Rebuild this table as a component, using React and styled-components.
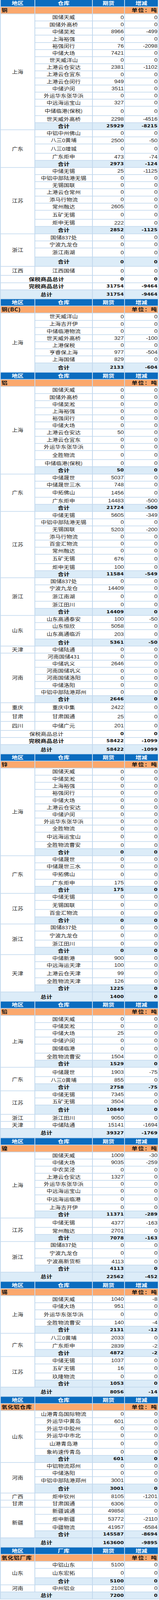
import React from 'react'
import styled, { createGlobalStyle } from 'styled-components'

const PAGE_HEIGHT = 4968

const GlobalStyle = createGlobalStyle`
  body {
    margin: 0;
    background: #fff;
  }
`

// the browser window may be shorter than the page; squeeze to fit the photo
const Frame = styled.div`
  overflow: hidden;
`

const Fit = styled.div`
  transform-origin: 0 0;
`

const Sheet = styled.div`
  display: grid;
  grid-template-columns: 86px 145px 80px 84px;
  gap: 2px;
  width: 405px;
  box-sizing: border-box;
  padding: 0 2px 2px;
  background: #c3d9ee;
  font-family: "Noto Sans CJK SC", sans-serif;
  font-size: 14.5px;
  color: #222;
`

const Cell = styled.div`
  display: flex;
  align-items: center;
  justify-content: center;
  height: ${({ $tall }) => ($tall ? '26.6px' : '20.1px')};
  line-height: 18px;
  white-space: nowrap;
  background: #fff;
`

const HeadCell = styled(Cell)`
  background: #0b6cbf;
  color: #fff;
  font-weight: 700;
  font-size: 15px;
`

const TitleCell = styled(Cell)`
  justify-content: ${({ $right }) => ($right ? 'flex-end' : 'flex-start')};
  padding: 0 1px 0 2px;
  background: #fba86d;
  color: #111;
  font-weight: 700;
  font-size: 15px;
  letter-spacing: ${({ $wide }) => ($wide ? '1.5px' : '0.5px')};
`

const RegionCell = styled.div`
  grid-row: span ${({ $span }) => $span};
  display: flex;
  align-items: center;
  justify-content: center;
  background: #fff;
  line-height: 18px;
`

const NameCell = styled(Cell)`
  grid-column: span ${({ $cols }) => $cols || 1};
  background: ${({ $sum }) => ($sum ? '#dcecf8' : '#fff')};
  font-weight: ${({ $bold }) => ($bold ? 700 : 400)};
  font-size: ${({ $bold }) => ($bold ? '15px' : '14.5px')};
  color: ${({ $bold }) => ($bold ? '#111' : '#222')};
`

const NumCell = styled(Cell)`
  justify-content: flex-end;
  padding-right: 1px;
  background: ${({ $sum }) => ($sum ? '#dcecf8' : '#fff')};
  font-family: ${({ $bold }) =>
    $bold ? '"DejaVu Sans", sans-serif' : '"Liberation Sans", Arial, sans-serif'};
  font-weight: ${({ $bold }) => ($bold ? 700 : 400)};
  font-size: ${({ $bold }) => ($bold ? '12.7px' : '14.5px')};
  color: ${({ $bold }) => ($bold ? '#111' : '#2a2a2a')};
`

// [名称, 期货, 增减, 高行]
const sections = [
  {
    title: '铜',
    store: '仓库',
    groups: [
      ['上海', [
        ['国储天威', '0', '0'], ['国储外高桥', '0', '0'], ['中储吴淞', '8966', '-499'],
        ['上海裕强', '0', '0'], ['裕强闵行', '76', '-2098'], ['中储大场', '7421', '0'],
        ['世天威洋山', '0', '0'], ['上港云仓安达', '2381', '-1102'], ['上港云仓宜东', '0', '0'],
        ['上港云仓闵行', '949', '0'], ['中储沪闵', '3511', '0'], ['外运华东张华浜', '0', '0'],
        ['中远海运宝山', '327', '0'], ['中储临港(保税)', '0', '0', 1], ['世天威外高桥', '2298', '-4516'],
      ], ['25929', '-8215']],
      ['广东', [
        ['中铝中州佛山', '0', '0'], ['八三0黄埔', '2500', '-50'], ['八三0增城', '0', '0', 1],
        ['广东炬申', '473', '-74'],
      ], ['2973', '-124']],
      ['江苏', [
        ['中储无锡', '25', '-1125'], ['中铝中部陆港无锡', '0', '0'], ['无锡国联', '0', '0'],
        ['上港云仓常州', '0', '0'], ['添马行物流', '0', '0'], ['常州融达', '2605', '0'],
        ['五矿无锡', '0', '0', 1], ['炬申无锡', '222', '0'],
      ], ['2852', '-1125']],
      ['浙江', [
        ['国储837处', '0', '0'], ['宁波九龙仓', '0', '0'], ['浙江南湖', '0', '0', 1],
      ], ['0', '0', 1]],
      ['江西', [['江西国储', '0', '0', 1]]],
    ],
    footer: [
      ['保税商品总计', '0', '0', 'bold'],
      ['完税商品总计', '31754', '-9464', 'bold'],
      ['总计', '31754', '-9464', 'grand', 1],
    ],
  },
  {
    title: '铜(BC)',
    store: '仓库',
    groups: [
      ['上海', [
        ['世天威洋山', '0', '0'], ['上海吉开伊', '0', '0'], ['中储临港物流', '0', '0'],
        ['世天威外高桥', '327', '-100'], ['上港保税', '0', '0'], ['亨睿保上海', '977', '-504'],
        ['上海国储', '829', '0'],
      ], ['2133', '-604', 1]],
    ],
    footer: [],
  },
  {
    title: '铝',
    store: '仓库',
    groups: [
      ['上海', [
        ['国储天威', '0', '0'], ['国储外高桥', '0', '0'], ['中储吴淞', '0', '0'],
        ['上海裕强', '0', '0'], ['裕强闵行', '0', '0'], ['中储大场', '0', '0'],
        ['上港云仓安达', '50', '0'], ['上港云仓宜东', '0', '0'], ['外运华东张华浜', '0', '0'],
        ['全胜物流', '0', '0', 1], ['中储临港(保税)', '0', '0'],
      ], ['50', '0']],
      ['广东', [
        ['中储晟世', '5037', '0'], ['中储晟世三水', '748', '0'], ['中拓佛山', '1456', '0', 1],
        ['广东炬申', '14483', '-500'],
      ], ['21724', '-500']],
      ['江苏', [
        ['中储无锡', '5605', '-349'], ['中铝中部陆港无锡', '0', '0'], ['无锡国联', '5203', '-200'],
        ['添马行物流', '0', '0'], ['百金汇物流', '0', '0'], ['常州融达', '0', '0'],
        ['五矿无锡', '676', '0', 1], ['炬申无锡', '100', '0'],
      ], ['11584', '-549']],
      ['浙江', [
        ['国储837处', '0', '0'], ['宁波九龙仓', '14409', '0'], ['浙江南湖', '0', '0', 1],
        ['浙江田川', '0', '0'],
      ], ['14409', '0']],
      ['山东', [
        ['山东高通泰安', '100', '-50'], ['山东恒欣', '5058', '0'], ['山东高通临沂', '203', '0', 1],
      ], ['5361', '-50']],
      ['天津', [['中储陆通', '0', '0']]],
      ['河南', [
        ['河南国储431', '0', '0'], ['中储巩义', '2646', '0'], ['河南国储巩义', '0', '0'],
        ['河南国储洛阳', '0', '0'], ['中储洛阳', '0', '0'], ['中铝中部陆港郑州', '0', '0'],
      ], ['2646', '0']],
      ['重庆', [['重庆中集', '2422', '0', 1]]],
      ['甘肃', [['甘肃国通', '25', '0', 1]]],
      ['四川', [['中储广元', '201', '0', 1]]],
    ],
    footer: [
      ['保税商品总计', '0', '0', 'plain'],
      ['完税商品总计', '58422', '-1099', 'bold'],
      ['总计', '58422', '-1099', 'grand', 1],
    ],
  },
  {
    title: '锌',
    store: '仓库',
    groups: [
      ['上海', [
        ['国储天威', '0', '0'], ['中储吴淞', '0', '0'], ['上海裕强', '0', '0'],
        ['裕强闵行', '0', '0'], ['中储大场', '0', '0'], ['上港云仓安达', '0', '0'],
        ['中储沪闵', '0', '0'], ['外运华东张华浜', '0', '0'], ['全胜物流', '0', '0'],
        ['中远海运宝山', '0', '0', 1], ['全胜物流曹安', '0', '0'],
      ], ['0', '0']],
      ['广东', [
        ['中储晟世', '0', '0'], ['中储晟世三水', '0', '0'], ['中拓佛山', '0', '0', 1],
        ['广东炬申', '175', '0'],
      ], ['175', '0']],
      ['江苏', [
        ['中储无锡', '0', '0'], ['无锡国联', '0', '0', 1], ['百金汇物流', '0', '0'],
      ], ['0', '0']],
      ['浙江', [
        ['国储837处', '0', '0'], ['宁波九龙仓', '0', '0', 1], ['浙江田川', '0', '0'],
      ], ['0', '0']],
      ['天津', [
        ['中储新港', '900', '0'], ['中远海运天津', '100', '0'], ['上港云仓天津', '99', '0', 1],
        ['全胜物流天津', '126', '0'],
      ], ['1225', '0']],
    ],
    footer: [['总计', '1400', '0', 'grand', 1]],
  },
  {
    title: '铅',
    store: '仓库',
    groups: [
      ['上海', [
        ['国储天威', '0', '0'], ['中储吴淞', '0', '0'], ['中储大场', '25', '0'],
        ['中储沪闵', '0', '0'], ['国储临港', '0', '0', 1], ['全胜物流曹安', '1504', '0'],
      ], ['1529', '0']],
      ['广东', [['中储晟世', '1903', '-75', 1], ['八三0黄埔', '855', '0']], ['2758', '-75']],
      ['江苏', [['中储无锡', '7345', '0'], ['五矿无锡', '3504', '0']], ['10849', '0', 1]],
      ['浙江', [['浙江田川', '9050', '0']]],
      ['天津', [['中储陆通', '15141', '-1694']]],
    ],
    footer: [['总计', '39327', '-1769', 'grand', 1]],
  },
  {
    title: '镍',
    store: '仓库',
    groups: [
      ['上海', [
        ['国储天威', '1009', '-30'], ['中储大场', '9035', '-259'], ['中农吴泾', '0', '0'],
        ['上港云仓安达', '1327', '0'], ['外运华东张华浜', '0', '0'], ['中远海运宝山', '0', '0'],
        ['中远海运临港', '0', '0', 1], ['上海吉开伊', '0', '0'],
      ], ['11371', '-289']],
      ['江苏', [['中储无锡', '4377', '-163', 1], ['常州融达', '2701', '0']], ['7078', '-163']],
      ['浙江', [
        ['国储837处', '0', '0'], ['宁波九龙仓', '0', '0', 1], ['宁波高新货柜', '4113', '0'],
      ], ['4113', '0']],
    ],
    footer: [['总计', '22562', '-452', 'grand', 1]],
  },
  {
    title: '锡',
    store: '仓库',
    groups: [
      ['上海', [
        ['国储天威', '1040', '-8'], ['中储大场', '951', '0'], ['外运华东张华浜', '0', '0', 1],
        ['全胜物流曹安', '140', '-4'],
      ], ['2131', '-12']],
      ['广东', [['八三0黄埔', '2033', '0', 1], ['广东炬申', '2839', '-2']], ['4872', '-2']],
      ['江苏', [
        ['中储无锡', '1037', '0'], ['五矿无锡', '16', '0', 1], ['玖隆物流', '0', '0'],
      ], ['1053', '0']],
    ],
    footer: [['总计', '8056', '-14', 'grand', 1]],
  },
  {
    title: '氧化铝仓库',
    store: '仓库',
    groups: [
      ['山东', [
        ['山港青岛国际物流', '0', '0'], ['外运华中黄岛', '601', '0'], ['外运华中胶州', '0', '0'],
        ['外运华中市北', '0', '0'], ['山港青岛港', '0', '0', 1], ['象屿速传青岛', '0', '0'],
      ], ['601', '0']],
      ['河南', [
        ['中铝物流郑州', '0', '0'], ['中储洛阳', '0', '0'], ['中铝中部陆港郑州', '3001', '0'],
      ], ['3001', '0', 1]],
      ['广西', [['炬申钦州', '8105', '-1201']]],
      ['甘肃', [['甘肃国通', '6306', '0']]],
      ['新疆', [
        ['新疆诚通', '49858', '0'], ['炬申新疆', '53772', '-2110', 1], ['中疆物流', '41957', '-6584'],
      ], ['145587', '-8694']],
    ],
    footer: [['总计', '163600', '-9895', 'grand', 1]],
  },
  {
    title: '氧化铝厂库',
    store: '厂库',
    groups: [
      ['山东', [['中铝山东', '5100', '0'], ['山东宏拓', '0', '0', 1]], ['5100', '0']],
      ['河南', [['中州铝业', '2100', '0']]],
    ],
    footer: [['总计', '7200', '0', 'grand']],
  },
]

function Group({ region, rows, total }) {
  const span = rows.length + (total ? 1 : 0)
  return (
    <>
      <RegionCell $span={span}>{region}</RegionCell>
      {rows.map(([name, qty, chg, tall], i) => (
        <React.Fragment key={name + i}>
          <NameCell $tall={!!tall}>{name}</NameCell>
          <NumCell $tall={!!tall}>{qty}</NumCell>
          <NumCell $tall={!!tall}>{chg}</NumCell>
        </React.Fragment>
      ))}
      {total && (
        <>
          <NameCell $tall={!!total[2]} $sum $bold>合计</NameCell>
          <NumCell $tall={!!total[2]} $sum $bold>{total[0]}</NumCell>
          <NumCell $tall={!!total[2]} $sum $bold>{total[1]}</NumCell>
        </>
      )}
    </>
  )
}

function Section({ data }) {
  return (
    <>
      <HeadCell>地区</HeadCell>
      <HeadCell>{data.store}</HeadCell>
      <HeadCell>期货</HeadCell>
      <HeadCell>增减</HeadCell>
      <TitleCell>{data.title}</TitleCell>
      <TitleCell />
      <TitleCell />
      <TitleCell $right $wide>单位：吨</TitleCell>
      {data.groups.map(([region, rows, total]) => (
        <Group key={region} region={region} rows={rows} total={total} />
      ))}
      {data.footer.map(([label, qty, chg, kind, tall]) => {
        const grand = kind === 'grand'
        return (
          <React.Fragment key={label}>
            <NameCell $cols={2} $tall={!!tall} $sum={grand} $bold={kind !== 'plain'}>
              {label}
            </NameCell>
            <NumCell $tall={!!tall} $sum={grand} $bold>{qty}</NumCell>
            <NumCell $tall={!!tall} $sum={grand} $bold>{chg}</NumCell>
          </React.Fragment>
        )
      })}
    </>
  )
}

export default function App() {
  const fit = Math.min(1, window.innerHeight / PAGE_HEIGHT)
  return (
    <>
      <GlobalStyle />
      <Frame style={{ height: Math.floor(PAGE_HEIGHT * fit) }}>
        <Fit style={{ transform: `scaleY(${fit})` }}>
          <Sheet>
            {sections.map((s) => (
              <Section key={s.title} data={s} />
            ))}
          </Sheet>
        </Fit>
      </Frame>
    </>
  )
}
